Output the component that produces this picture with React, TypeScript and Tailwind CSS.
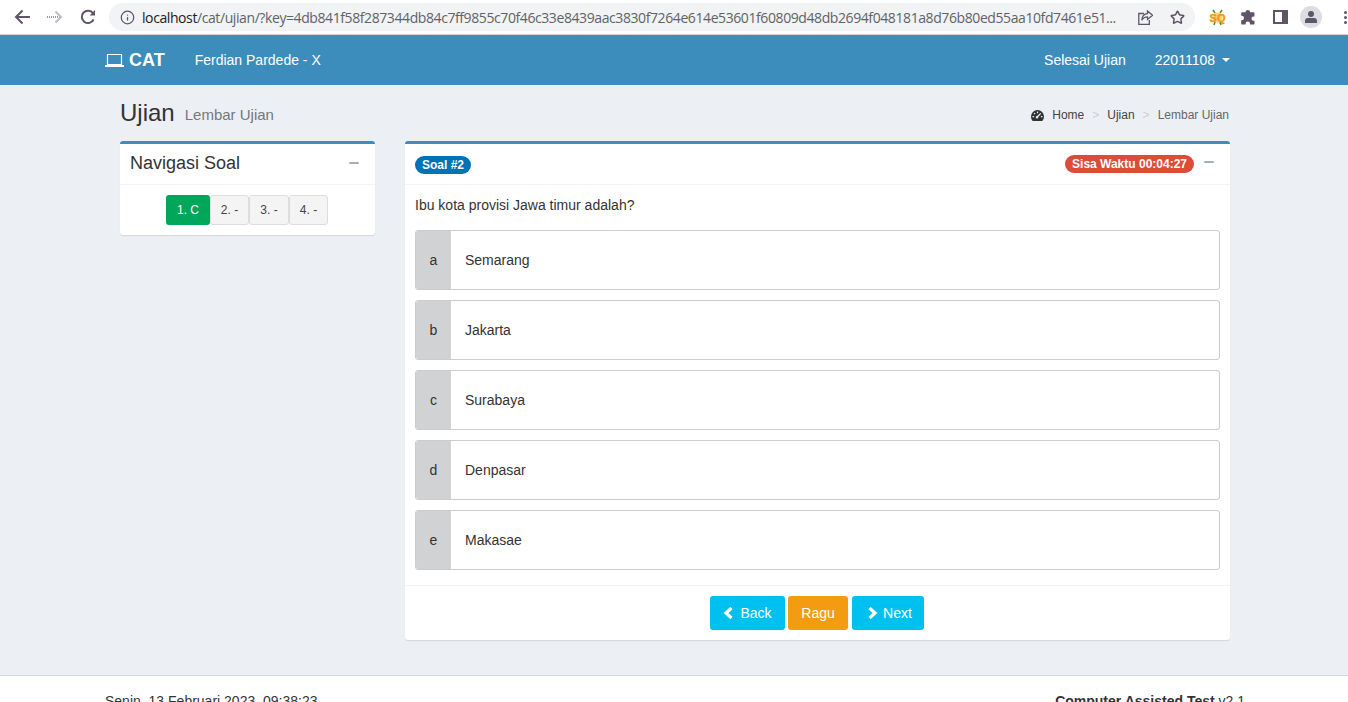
import React from "react";
import { Info, Star } from "lucide-react";

const options = [
  ["a", "Semarang"],
  ["b", "Jakarta"],
  ["c", "Surabaya"],
  ["d", "Denpasar"],
  ["e", "Makasae"],
];

function Minus() {
  return <span className="block w-[10px] h-[2px] mt-[-3px] bg-[#a9aebf] rounded-[1px]" />;
}

function ChromeBar() {
  const stroke = "#5f5468";
  return (
    <div className="h-[35px] bg-white border-b border-[#d3d5d8] flex items-center shrink-0">
      <svg className="ml-[14px] w-[17px] h-[16px]" viewBox="0 0 17 16" fill="none" stroke={stroke} strokeWidth="2">
        <path d="M16 8H2.5M8.5 1.5L2 8l6.5 6.5" />
      </svg>
      <svg className="ml-[16px] w-[16px] h-[14px]" viewBox="0 0 16 14" fill="none" stroke="#bcbcc8" strokeWidth="2">
        <path d="M0 7h14" strokeDasharray="1 1" stroke="#9a9ab0" />
        <path d="M8.5 1.5L14 7l-5.5 5.5" />
      </svg>
      <svg className="ml-[17px] w-[16px] h-[16px]" viewBox="0 0 16 16" fill="none" stroke={stroke} strokeWidth="2">
        <path d="M13.6 10.5A6.2 6.2 0 1 1 13 4.2" />
        <path d="M15 1v5.4H9.6z" fill={stroke} stroke="none" />
      </svg>
      <div className="ml-[13px] w-[1086px] h-[28px] rounded-full bg-[#f1f3f4] flex items-center">
        <Info className="ml-[11px] w-[15px] h-[15px] text-[#5f5468]" strokeWidth={2} />
        <div className="ml-[7px] w-[996px] whitespace-nowrap text-[14px] text-[#5f6368] font-['Open_Sans',sans-serif] tracking-[-0.41px]">
          <span className="text-[#202124]">localhost</span>/cat/ujian/?key=4db841f58f287344db84c7ff9855c70f46c33e8439aac3830f7264e614e53601f60809d48db2694f048181a8d76b80ed55aa10fd7461e51...
        </div>
        <svg className="w-[15px] h-[15px]" viewBox="0 0 15 15" fill="none" stroke={stroke} strokeWidth="1.3">
          <path d="M6 3.5H.8v11h10.5V10" />
          <path d="M9.5 1l5 4.2-5 4.2V6.8C7 6.8 5 8 3.8 10.3c.2-3.7 2.4-6.4 5.7-6.6z" />
        </svg>
        <Star className="ml-[17px] w-[15px] h-[15px] text-[#5f5468]" strokeWidth={2.4} />
      </div>
      <svg className="ml-[14px] w-[17px] h-[17px]" viewBox="0 0 17 17">
        <path d="M4 1l2 3M13 1l-2 3M5 16l1-3M12 16l-1-3" stroke="#4c9a2a" strokeWidth="1.6" />
        <circle cx="8.5" cy="8.5" r="5" fill="#fbd27a" />
        <text x="8.5" y="12.5" textAnchor="middle" fontSize="11" fontWeight="bold" fontFamily="Liberation Sans, sans-serif" fill="#f09a14" stroke="#f09a14" strokeWidth="0.4">SQ</text>
      </svg>
      <svg className="ml-[14px] w-[16px] h-[16px]" viewBox="0 0 16 16" fill={stroke}>
        <path d="M5.5 3.2a2.3 2.3 0 0 1 4.6 0h3.2a1.2 1.2 0 0 1 1.2 1.2v3h-.9a2.2 2.2 0 0 0 0 4.4h.9v2.6a1.2 1.2 0 0 1-1.2 1.2H10v-.8a2.2 2.2 0 0 0-4.4 0v.8H2.4a1.2 1.2 0 0 1-1.2-1.2v-3.1h.5a2.3 2.3 0 0 0 0-4.6h-.5V4.4a1.2 1.2 0 0 1 1.2-1.2z" />
      </svg>
      <svg className="ml-[17px] w-[15px] h-[14px]" viewBox="0 0 15 14" fill={stroke}>
        <path fillRule="evenodd" d="M0 0h15v14H0zM2 2v10h7V2z" />
      </svg>
      <div className="ml-[12px] w-[22px] h-[22px] rounded-full bg-[#dcdde2] flex flex-col items-center justify-center gap-[1px]">
        <span className="w-[6px] h-[6px] rounded-full bg-[#5f5468]" />
        <span className="w-[12px] h-[5px] rounded-t-[3px] bg-[#5f5468]" />
      </div>
      <svg className="ml-[22px] w-[3px] h-[13px] shrink-0" viewBox="0 0 3 13" fill={stroke}>
        <circle cx="1.5" cy="1.5" r="1.5" />
        <circle cx="1.5" cy="6.5" r="1.5" />
        <circle cx="1.5" cy="11.5" r="1.5" />
      </svg>
    </div>
  );
}

function Card({ className, children }: { className: string; children: React.ReactNode }) {
  return (
    <div className={"bg-white border-t-[3px] border-[#3c8dbc] rounded-[3px] shadow-[0_1px_1px_rgba(0,0,0,0.1)] " + className}>
      {children}
    </div>
  );
}

export default function App() {
  return (
    <div className="h-[702px] overflow-hidden bg-[#ecf0f5] flex flex-col text-[14px] text-[#333] font-['Liberation_Sans',Arial,sans-serif]">
      <ChromeBar />
      <nav className="h-[50px] bg-[#3c8dbc] text-white shrink-0 pl-[105px] pr-[118px] flex items-center">
        <svg className="w-[19px] h-[13px]" viewBox="0 0 19 13" fill="none" stroke="#fff">
          <path d="M2.5.5h14v10h-14z" strokeWidth="1.2" />
          <path d="M0 12h19" strokeWidth="2" />
        </svg>
        <span className="ml-[5px] text-[18px] font-bold">CAT</span>
        <span className="ml-[30px]">Ferdian Pardede - X</span>
        <span className="ml-auto">Selesai Ujian</span>
        <span className="ml-[29px]">22011108</span>
        <span className="ml-[7px] w-0 h-0 border-x-4 border-x-transparent border-t-4 border-t-white" />
      </nav>
      <main className="flex-1 min-h-0 pl-[120px] pr-[118px] pt-[15px]">
        <div className="h-[26px] mb-[15px] flex items-center">
          <h1 className="text-[24px] leading-[26px]">Ujian</h1>
          <span className="ml-[10px] mt-[5px] text-[15px] text-[#777]">Lembar Ujian</span>
          <div className="ml-auto mr-[1px] mt-[4px] flex items-center text-[12px] text-[#444]">
            <svg className="w-[13px] h-[11px]" viewBox="0 0 13 11" fill="#333">
              <path fillRule="evenodd" d="M6.5 0A6.5 6.5 0 0 0 0 6.5c0 1.7.6 3.2 1.7 4.5h9.6A6.5 6.5 0 0 0 13 6.5 6.5 6.5 0 0 0 6.5 0zM5.9 1.6h1.2v1.6H5.9zM2.6 3.6l.9-.9 1 1-.9.9zM1.5 6h1.6v1.2H1.5zM9.9 6h1.6v1.2H9.9zM9.3 2.9l.9.8-3 3.3a1.2 1.2 0 1 1-1-.9z" />
            </svg>
            <span className="ml-[8px]">Home</span>
            <span className="mx-[8px] text-[#ccc]">&gt;</span>
            <span>Ujian</span>
            <span className="mx-[8px] text-[#ccc]">&gt;</span>
            <span className="text-[#666]">Lembar Ujian</span>
          </div>
        </div>
        <div className="flex items-start gap-[30px]">
          <Card className="w-[255px] shrink-0">
            <div className="h-[41px] pl-[10px] pr-[16px] border-b border-[#f4f4f4] flex items-center justify-between">
              <span className="text-[18px] mt-[-2px]">Navigasi Soal</span>
              <Minus />
            </div>
            <div className="h-[50px] pr-[1px] flex items-center justify-center text-[12px]">
              <span className="w-[44px] h-[30px] rounded-[3px] bg-[#00a65a] text-white flex items-center justify-center">1. C</span>
              <span className="w-[39px] h-[30px] rounded-[3px] bg-[#f4f4f4] border border-[#ddd] text-[#444] flex items-center justify-center">2. -</span>
              <span className="w-[40px] h-[30px] rounded-[3px] bg-[#f4f4f4] border border-[#ddd] text-[#444] flex items-center justify-center">3. -</span>
              <span className="w-[39px] h-[30px] rounded-[3px] bg-[#f4f4f4] border border-[#ddd] text-[#444] flex items-center justify-center">4. -</span>
            </div>
          </Card>
          <Card className="flex-1">
            <div className="h-[41px] pl-[10px] pr-[16px] border-b border-[#f4f4f4] flex items-center">
              <span className="mt-[2px] h-[18px] px-[7px] rounded-full bg-[#0073b7] text-white text-[12px] font-bold flex items-center">Soal #2</span>
              <span className="ml-auto h-[18px] px-[7px] rounded-full bg-[#dd4b39] text-white text-[12px] font-bold flex items-center">Sisa Waktu 00:04:27</span>
              <span className="ml-[10px]"><Minus /></span>
            </div>
            <div className="pt-[10px] px-[10px] pb-[15px]">
              <p className="h-[20px] leading-[20px] mb-[15px]">Ibu kota provisi Jawa timur adalah?</p>
              <div className="flex flex-col gap-[10px]">
                {options.map(([k, v]) => (
                  <div key={k} className="h-[60px] border border-[#ccc] rounded-[3px] flex items-center overflow-hidden">
                    <span className="w-[35px] h-full bg-[#d1d2d4] flex items-center justify-center">{k}</span>
                    <span className="ml-[14px]">{v}</span>
                  </div>
                ))}
              </div>
            </div>
            <div className="h-[55px] pr-[1px] border-t border-[#f4f4f4] flex items-center justify-center gap-[3px]">
              <span className="w-[75px] h-[34px] rounded-[3px] bg-[#00c0ef] text-white flex items-center justify-center">
                <svg className="w-[10px] h-[12px]" viewBox="0 0 10 12" fill="none" stroke="#fff" strokeWidth="3.2">
                  <path d="M8.5 1L3 6l5.5 5" />
                </svg>
                <span className="ml-[7px]">Back</span>
              </span>
              <span className="w-[60px] h-[34px] rounded-[3px] bg-[#f39c12] text-white flex items-center justify-center">Ragu</span>
              <span className="ml-[1px] w-[72px] h-[34px] pl-[4px] rounded-[3px] bg-[#00c0ef] text-white flex items-center justify-center">
                <svg className="w-[10px] h-[12px]" viewBox="0 0 10 12" fill="none" stroke="#fff" strokeWidth="3.2">
                  <path d="M1.5 1L7 6l-5.5 5" />
                </svg>
                <span className="ml-[5px]">Next</span>
              </span>
            </div>
          </Card>
        </div>
      </main>
      <footer className="h-[27px] shrink-0 bg-white border-t border-[#d2d6de] pl-[105px] pr-[103px] pt-[15px] flex justify-between leading-[20px]">
        <span>Senin, 13 Februari 2023, 09:38:23</span>
        <span><b>Computer Assisted Test</b> v2.1</span>
      </footer>
    </div>
  );
}
